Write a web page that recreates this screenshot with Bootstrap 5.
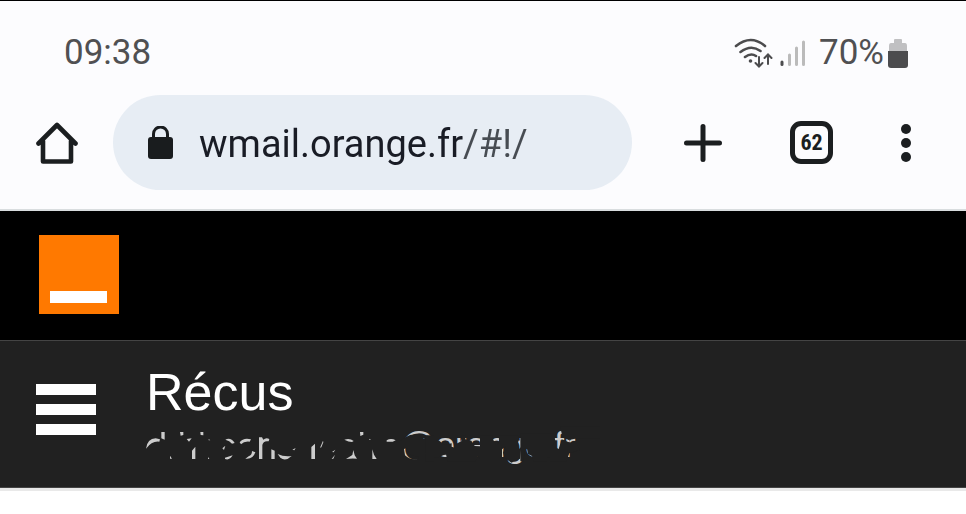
<!DOCTYPE html>
<html lang="fr">
<head>
<meta charset="utf-8">
<meta name="viewport" content="width=device-width, initial-scale=1">
<title>Récus</title>
<link href="https://cdn.jsdelivr.net/npm/bootstrap@5.3.0/dist/css/bootstrap.min.css" rel="stylesheet">
<style>
body { background: #fff; font-family: Roboto, "Liberation Sans", sans-serif; }
svg { display: block; flex: none; }
.browser { background: #fcfcfe; border-top: 1px solid #000; border-bottom: 2px solid #d9dddf; }
.status { padding: 25px 58px 15px 64px; color: #505052; line-height: 54px; }
.clock, .battery { font-size: 35px; }
.battery { margin-left: 13px; margin-right: 4px; }
.tools { padding: 0 55px 19px 36px; color: #1b1e20; }
.tool { border: 0; background: none; padding: 0; color: inherit; flex: none; }
.address { background: #e7edf4; height: 95px; margin: 0 52px 0 35px; padding: 0 34px; min-width: 0; }
.address input { border: 0; outline: 0; padding: 3px 0 0; margin-left: 25px; min-width: 0; font-size: 38px; line-height: 48px; color: transparent;
  background: linear-gradient(to right, #191c25 264px, #474c52 264px); -webkit-background-clip: text; background-clip: text; }
.tabs { width: 43px; height: 43px; border: 5px solid #1b1e20; border-radius: 11px; font-family: "Roboto Condensed", Roboto, sans-serif; font-size: 22px; font-weight: 700; line-height: 32px; margin: 0 68px; }
.brand-bar { background: #000; padding: 24px 39px 25px; }
.folder-bar { background: #212121; border-top: 1px solid #444; border-bottom: 1px solid #444; color: #fff; font-family: "Liberation Sans", Arial, sans-serif; padding: 21px 36px 19px; }
.folder-bar .tool { margin-bottom: 12px; }
.folder-bar .heading { margin-left: 50px; }
.folder-bar h1 { font-size: 52px; line-height: 60px; font-weight: 400; margin: 0; }
.account { font-size: 35px; line-height: 46px; color: #ccc; }
.domain svg { position: absolute; left: 0; top: 0; }
.edge { height: 3px; background: #e9e9e9; }
</style>
</head>
<body>
<header class="browser">
  <div class="status d-flex justify-content-between align-items-center">
    <span class="clock">09:38</span>
    <div class="d-flex align-items-center">
      <svg width="72" height="32" viewBox="0 0 72 32" fill="none" stroke="#4c4c4e" stroke-width="2.600" stroke-linecap="round" aria-hidden="true">
        <path d="M2 9Q17-3 31 9M6.500 15Q17 7 26.500 14M11 20Q17 15.500 22 19"/>
        <circle cx="16.500" cy="24" r="1.800" fill="#4c4c4e" stroke="none"/>
        <path stroke-width="2" d="M25 20V29M21.500 26L25 29.500L28.500 26M34 27V18M30.500 21L34 17.500L37.500 21"/>
        <path stroke-width="3" d="M48 25V27.500"/>
        <path stroke="#bbb" stroke-width="3" d="M55.500 18V27.500M62.500 11V27.500M69.500 5V27.500"/>
      </svg>
      <span class="battery">70%</span>
      <svg width="20" height="30" viewBox="0 0 20 30" aria-hidden="true"><path fill="#c0c0c2" d="M6 2Q6 1 7 1H13Q14 1 14 2V5H17Q19 5 19 8V15H1V8Q1 5 3 5H6Z"/><path fill="#4c4c4e" d="M0 13H20V27Q20 30 17 30H3Q0 30 0 27Z"/></svg>
    </div>
  </div>
  <div class="tools d-flex align-items-center">
    <button class="tool" type="button" aria-label="Accueil">
      <svg width="42" height="44" viewBox="0 0 42 44" fill="none" stroke="currentColor" stroke-width="4.600" stroke-linejoin="round" stroke-linecap="round"><path d="M2.500 22.500L21 4L39.500 22.500M7 20V40.500H35V20" /></svg>
    </button>
    <div class="address rounded-pill d-flex align-items-center flex-grow-1">
      <svg width="27" height="34" viewBox="0 0 27 34" aria-hidden="true"><rect x="1" y="11" width="25" height="22" rx="3" fill="#191c1e"/><path d="M6.500 12V8A7 7 0 0 1 20.500 8V12" fill="none" stroke="#191c1e" stroke-width="3"/></svg>
      <input class="flex-grow-1" type="text" aria-label="Adresse" value="wmail.orange.fr/#!/">
    </div>
    <button class="tool" type="button" aria-label="Nouvel onglet">
      <svg width="38" height="38" viewBox="0 0 38 38" stroke="currentColor" stroke-width="5" stroke-linecap="round"><path d="M19 2.500V35.500M2.500 19H35.500"/></svg>
    </button>
    <button class="tool tabs" type="button">62</button>
    <button class="tool" type="button" aria-label="Menu">
      <svg width="10" height="38" viewBox="0 0 10 38" fill="currentColor"><circle cx="5" cy="5" r="5"/><circle cx="5" cy="19" r="5"/><circle cx="5" cy="33" r="5"/></svg>
    </button>
  </div>
</header>
<div class="brand-bar">
  <svg width="80" height="80" viewBox="0 0 80 80" role="img" aria-label="Orange"><path fill="#ff7900" d="M0 0H80V79H0Z"/><path fill="#fff" d="M11 56H68V68H11Z"/></svg>
</div>
<div class="folder-bar d-flex align-items-center">
  <button class="tool" type="button" aria-label="Ouvrir le menu">
    <svg width="60" height="51" viewBox="0 0 60 51" fill="#fff"><path d="M0 0H60V11H0ZM0 20H60V31H0ZM0 40H60V51H0Z"/></svg>
  </button>
  <div class="heading">
    <h1>Récus</h1>
    <div class="account d-flex">
      <!-- hidden part of the address: only stray marks show -->
      <svg width="254" height="46" viewBox="18 21 762 138" fill="#ccc" aria-hidden="true">
        <path d="M18 101Q22 71 47 70L60 73L58 80Q36 77 18 101ZM64 51H74V74L64 70ZM120 51H130V60L122 62ZM181 51H190V61L182 60ZM140 72L155 70L147 80ZM156 107L166 95V132H156ZM90 122L96 131H90ZM205 126L208 132H204ZM206 72L211 76H206Z"/>
        <path d="M256 74Q272 66 284 84L276 86Q269 77 256 74ZM247 100L256 92L252 105ZM255 128L278 121Q269 137 255 132ZM299 82Q310 67 333 73L329 80Q312 78 303 88ZM336 108L346 112Q339 134 316 131L326 124Q336 121 336 108ZM357 67H366L370 74Q378 66 388 72L386 79Q370 76 367 90V132H357ZM394 103L404 107V132H394ZM413 117Q431 126 455 123Q436 141 421 128ZM457 104L467 99L463 106Z"/>
        <path d="M514 96L525 86V132H514ZM540 98L549 77L550 82L544 97ZM576 111L586 104L581 112ZM575 132L585 119L580 131ZM613 74Q629 68 641 78L636 81Q626 81 613 74ZM640 105L644 121L651 131Q636 129 618 132L637 120ZM660 51H670V59L661 63ZM688 71L693 75H688ZM697 103L702 119L710 132H697ZM740 76Q753 68 767 76L758 80H740Z"/>
      </svg>
      <span class="domain position-relative">@orange.fr
        <!-- marker scribble over the domain -->
        <svg width="200" height="46" viewBox="300 66 600 138" fill="#212121" aria-hidden="true">
          <path d="M296 124L303 121L318 111Q340 98 360 108L371 116L384 106V204H296ZM312 147L315 166Q332 182 356 176L354 169Q335 170 327 160L326 150L320 144Z" fill-rule="evenodd"/>
          <path d="M376 106L400 106V118L418 122L432 134L455 130V140L464 143V135L472 130L484 124V106H496V118L514 122L524 138L540 139V106H578L580 120L589 135L597 128V106H654L658 118L650 136L658 146L664 140L660 176L634 188L614 173L609 158L616 140L606 148L606 204H540V178L534 168L526 184H442L438 162L416 172L402 172V184H376Z"/>
          <path d="M661 100H760L766 122L758 137L776 147L785 118L805 126L828 130L840 150L808 160L799 184H750V172H741V184H700L696 168L684 162L681 146L673 154L671 184H661Z"/>
          <path d="M780 80H900V116H826L806 120L788 112Z"/>
        </svg>
      </span>
    </div>
  </div>
</div>
<div class="edge"></div>
<script src="https://cdn.jsdelivr.net/npm/bootstrap@5.3.0/dist/js/bootstrap.bundle.min.js"></script>
</body>
</html>
